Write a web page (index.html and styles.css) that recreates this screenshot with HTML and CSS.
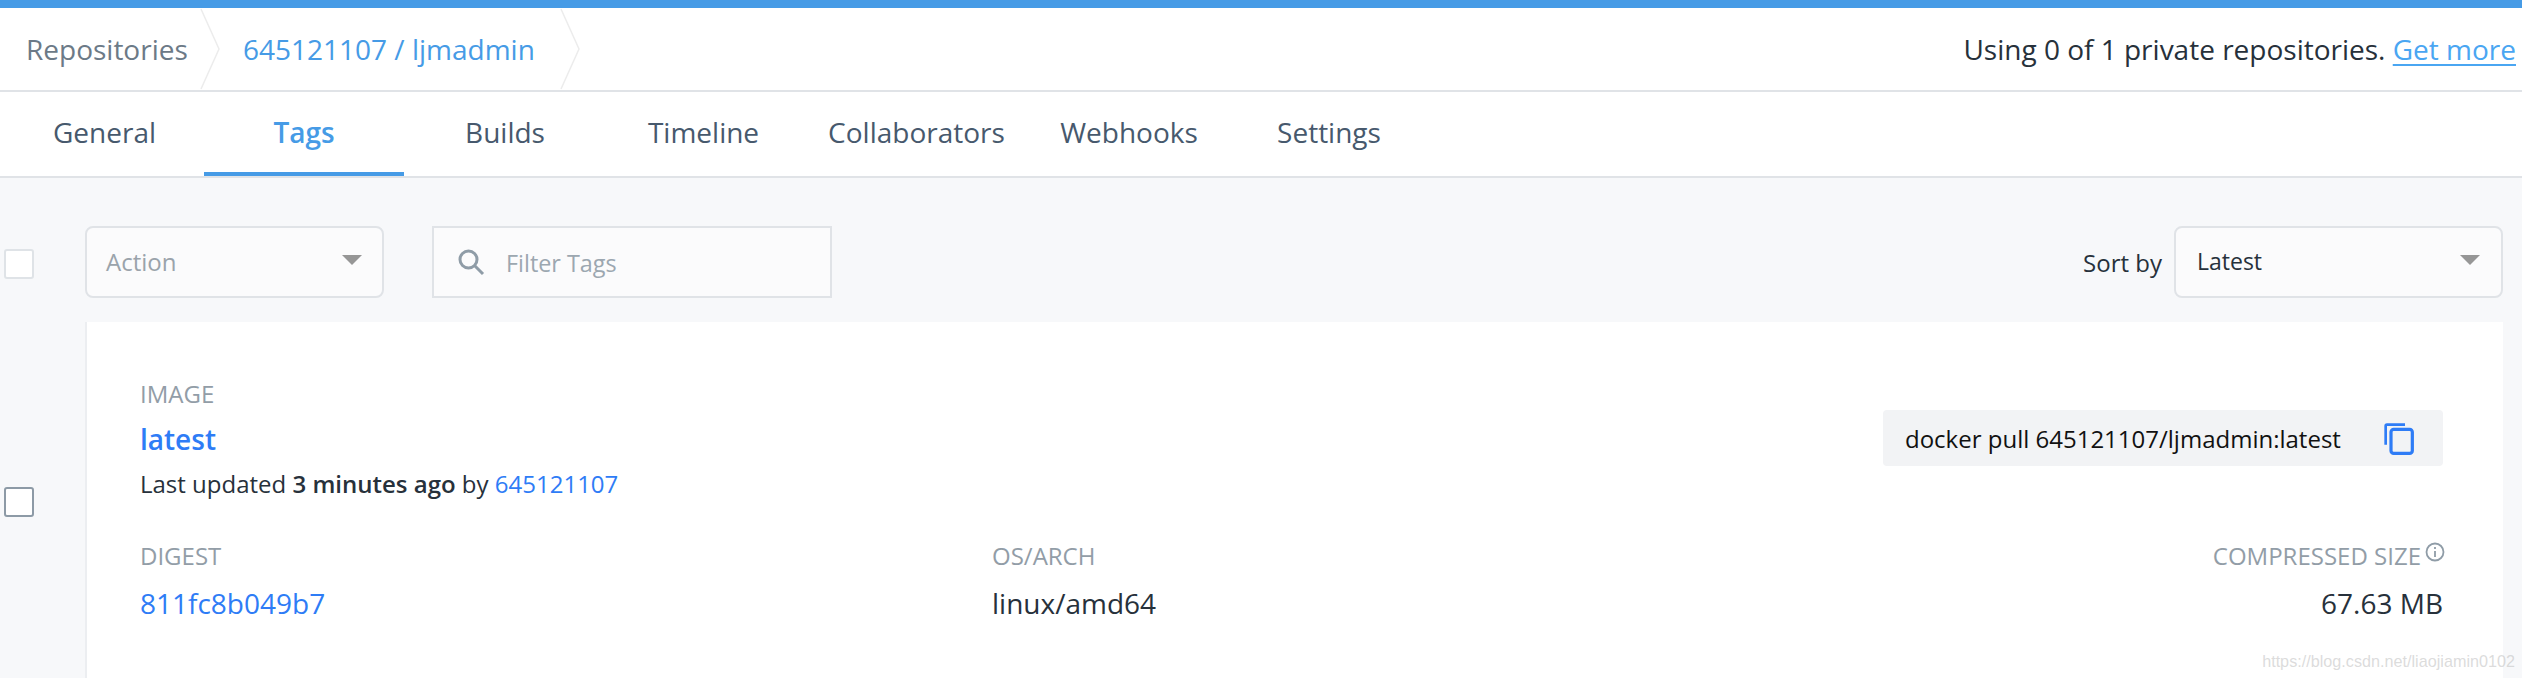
FILE: index.html
```html
<!DOCTYPE html>
<html lang="en">
<head>
<meta charset="utf-8">
<title>645121107 / ljmadmin tags</title>
<link rel="stylesheet" href="styles.css">
</head>
<body>
<div class="accent"></div>
<header class="crumbs">
  <nav class="trail">
    <a class="crumb first">Repositories<svg class="chev" viewBox="0 0 20 82" aria-hidden="true"><path d="M1 1 L19 41 L1 81"/></svg></a>
    <a class="crumb second">645121107 / ljmadmin<svg class="chev" viewBox="0 0 20 82" aria-hidden="true"><path d="M1 1 L19 41 L1 81"/></svg></a>
  </nav>
  <p class="usage">Using 0 of 1 private repositories. <a>Get more</a></p>
</header>
<nav class="tabs">
  <a class="tab t1">General</a>
  <a class="tab t2 active">Tags</a>
  <a class="tab t3">Builds</a>
  <a class="tab t4">Timeline</a>
  <a class="tab t5">Collaborators</a>
  <a class="tab t6">Webhooks</a>
  <a class="tab t7">Settings</a>
</nav>
<main class="content">
  <div class="toolbar">
    <span class="check"></span>
    <div class="select action"><span>Action</span><i class="caret"></i></div>
    <div class="filter">
      <svg class="search" viewBox="0 0 28 28" aria-hidden="true"><circle cx="11.5" cy="11.5" r="8.5"/><path d="M17.5 17.5 L26 26"/></svg>
      <span>Filter Tags</span>
    </div>
    <div class="sort">
      <span class="sort-label">Sort by</span>
      <div class="select latest"><span>Latest</span><i class="caret"></i></div>
    </div>
  </div>
  <div class="row">
    <span class="check dark"></span>
    <section class="card">
      <div class="top">
        <div>
          <div class="label">IMAGE</div>
          <a class="tag">latest</a>
          <div class="updated">Last updated <b>3 minutes ago</b> by <a>645121107</a></div>
        </div>
        <div class="pull">
          <span>docker pull 645121107/ljmadmin:latest</span>
          <svg class="copy" viewBox="0 0 24 24" aria-hidden="true"><path class="fillp" d="M16.5 1 H3 A2 2 0 0 0 1 3 V17 H3 V3 H16.5 Z"/><rect x="6" y="5.5" width="16" height="18" rx="2"/></svg>
        </div>
      </div>
      <div class="meta">
        <div class="col digest">
          <div class="label">DIGEST</div>
          <a class="value">811fc8b049b7</a>
        </div>
        <div class="col os">
          <div class="label">OS/ARCH</div>
          <div class="value">linux/amd64</div>
        </div>
        <div class="col size">
          <div class="label size-label">COMPRESSED SIZE<svg class="info" viewBox="0 0 20 20" aria-hidden="true"><circle cx="10" cy="10" r="8.5"/><path d="M10 9 V15 M10 5 V7"/></svg></div>
          <div class="value">67.63 MB</div>
        </div>
      </div>
    </section>
  </div>
</main>
<div class="watermark">https://blog.csdn.net/liaojiamin0102</div>
</body>
</html>
```
FILE: styles.css
```css
* { box-sizing: border-box; }
html, body { margin: 0; height: 678px; overflow: hidden; }
body { position: relative; font-family: "Open Sans", "Liberation Sans", sans-serif; background: #f7f8fa; color: #27313b; }
a { color: inherit; text-decoration: none; }
p { margin: 0; }

.accent { height: 8px; background: #469be6; }

.crumbs { height: 84px; background: #fff; border-bottom: 2px solid #e0e3e7; display: flex; justify-content: space-between; align-items: center; padding: 0 6px 0 26px; font-size: 28px; }
.trail { display: flex; height: 100%; }
.crumb { position: relative; display: flex; align-items: center; white-space: nowrap; }
.first { width: 174px; color: #6c7a87; }
.second { width: 317px; margin-left: 43px; color: #469be6; }
.chev { position: absolute; top: 0; right: -20px; width: 20px; height: 82px; fill: none; stroke: #ececec; stroke-width: 1.5; }
.usage { color: #27313b; }
.usage a { color: #4aa6f2; text-decoration: underline; text-underline-offset: 4px; }

.tabs { height: 86px; background: #fff; border-bottom: 2px solid #e0e3e7; display: flex; font-size: 28px; color: #47596d; }
.tab { display: flex; align-items: center; justify-content: center; padding-bottom: 4px; }
.t1 { margin-left: 53px; width: 103px; }
.t2 { margin-left: 48px; width: 200px; color: #469be6; font-weight: 600; border-bottom: 4px solid #469be6; padding-bottom: 0; }
.t3 { margin-left: 61px; width: 80px; }
.t4 { margin-left: 103px; width: 111px; }
.t5 { margin-left: 69px; width: 177px; }
.t6 { margin-left: 55px; width: 138px; }
.t7 { margin-left: 78px; width: 106px; }

.content { padding: 48px 19px 0 4px; }
.toolbar { display: flex; align-items: center; height: 72px; }
.check { flex: none; width: 30px; height: 30px; background: #fff; border: 2px solid #dfe3e7; border-radius: 3px; margin-top: 3px; }
.check.dark { border-color: #8d9aa6; margin-top: 165px; }
.select { display: flex; align-items: center; justify-content: space-between; height: 72px; background: #fbfbfc; border: 2px solid #e0e3e7; border-radius: 8px; font-size: 24px; }
.select span { margin-top: -2px; }
.action { width: 299px; margin-left: 51px; color: #9aa3ab; padding: 0 20px 0 19px; }
.latest { width: 329px; color: #27313b; font-size: 23px; padding: 0 21px 0 21px; }
.caret { width: 0; height: 0; border: solid transparent; border-width: 10px 10px 0 10px; border-top-color: #969696; margin-top: -4px; }
.filter { display: flex; align-items: center; width: 400px; height: 72px; margin-left: 48px; background: #fbfbfc; border: 2px solid #e0e3e7; padding: 0 0 0 23px; color: #9ca7b0; font-size: 23.4px; }
.filter span { padding-top: 2px; }
.search { width: 28px; height: 28px; fill: none; stroke: #8f9ca7; stroke-width: 3; margin-right: 21px; }
.sort { margin-left: auto; display: flex; align-items: center; gap: 12px; font-size: 24px; }
.sort-label { color: #27313b; }

.row { display: flex; align-items: flex-start; margin-top: 24px; }
.card { flex: 1; margin-left: 51px; height: 360px; background: #fff; border-left: 2px solid #eceef1; padding: 57px 60px 0 53px; }
.top { display: flex; justify-content: space-between; align-items: flex-start; }
.label { font-size: 24px; line-height: 30px; color: #929da7; }
.tag { display: block; font-size: 28px; line-height: 40px; color: #2e7cf6; font-weight: 600; margin-top: 10px; }
.updated { font-size: 24px; line-height: 34px; color: #27313b; margin-top: 8px; }
.updated b { font-weight: 600; }
.updated a { color: #2e7cf6; }
.pull { display: flex; align-items: center; justify-content: space-between; width: 560px; height: 56px; margin-top: 31px; padding: 0 28px 0 22px; background: #f2f3f5; border-radius: 4px; font-size: 24px; color: #111; }
.copy { width: 32px; height: 34px; }
.copy rect { fill: none; stroke: #2e7cf6; stroke-width: 2.4; }
.copy .fillp { fill: #2e7cf6; }
.meta { display: flex; margin-top: 40px; }
.col { flex: none; }
.digest { width: 852px; }
.os { flex: 1; }
.size { text-align: right; }
.size-label { margin-right: -2px; }
.value { font-size: 28px; line-height: 40px; margin-top: 12px; color: #27313b; }
a.value { display: block; color: #2e7cf6; }
.info { width: 20px; height: 20px; vertical-align: 3px; margin-left: 4px; fill: none; stroke: #8f9ca7; stroke-width: 1.8; }

.watermark { position: absolute; right: 7px; bottom: 7px; font-family: "Liberation Sans", sans-serif; font-size: 16.2px; color: rgba(190,190,190,.55); }
```
